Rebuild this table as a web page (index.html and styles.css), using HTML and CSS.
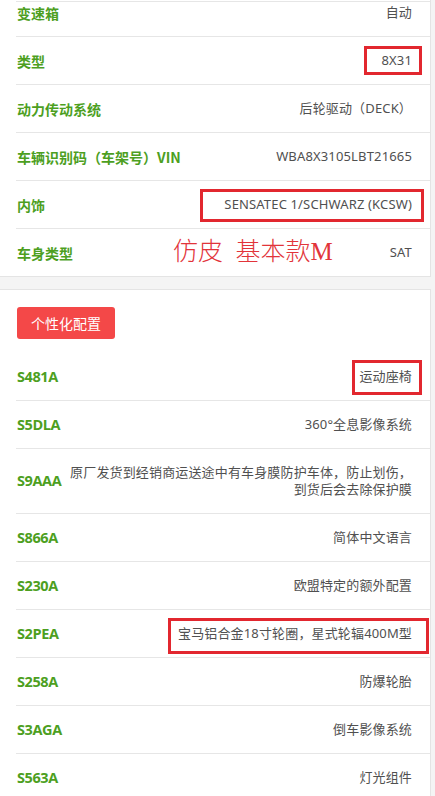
FILE: index.html
```html
<!DOCTYPE html>
<html lang="zh-CN">
<head>
<meta charset="utf-8">
<title>车辆配置</title>
<link rel="stylesheet" href="styles.css">
</head>
<body>
<div class="top-line"></div>
<section class="card card-first">
  <div class="row"><div class="label">变速箱</div><div class="value">自动</div></div>
  <div class="row"><div class="label">类型</div><div class="value mark mark-type">8X31</div></div>
  <div class="row"><div class="label">动力传动系统</div><div class="value">后轮驱动（DECK）</div></div>
  <div class="row"><div class="label">车辆识别码（车架号）VIN</div><div class="value">WBA8X3105LBT21665</div></div>
  <div class="row"><div class="label">内饰</div><div class="value mark mark-trim">SENSATEC 1/SCHWARZ (KCSW)</div></div>
  <div class="row row-last row-note"><div class="label">车身类型</div><span class="note">仿皮&nbsp; 基本款M</span><div class="value">SAT</div></div>
</section>
<section class="card">
  <div class="card-head"><button class="btn">个性化配置</button></div>
  <div class="row"><div class="label code">S481A</div><div class="value mark mark-seat">运动座椅</div></div>
  <div class="row"><div class="label code">S5DLA</div><div class="value">360°全息影像系统</div></div>
  <div class="row"><div class="label code">S9AAA</div><div class="value">原厂发货到经销商运送途中有车身膜防护车体，防止划伤，到货后会去除保护膜</div></div>
  <div class="row"><div class="label code">S866A</div><div class="value">简体中文语言</div></div>
  <div class="row"><div class="label code">S230A</div><div class="value">欧盟特定的额外配置</div></div>
  <div class="row"><div class="label code">S2PEA</div><div class="value mark mark-wheel">宝马铝合金18寸轮圈，星式轮辐400M型</div></div>
  <div class="row"><div class="label code">S258A</div><div class="value">防爆轮胎</div></div>
  <div class="row"><div class="label code">S3AGA</div><div class="value">倒车影像系统</div></div>
  <div class="row"><div class="label code">S563A</div><div class="value">灯光组件</div></div>
</section>
</body>
</html>
```
FILE: styles.css
```css
html, body {
  margin: 0;
  padding: 0;
}
body {
  background: #f4f4f4;
  font-family: "Noto Sans", "Noto Sans CJK SC", sans-serif;
  overflow: hidden;
}
.top-line {
  position: fixed;
  top: 1px;
  left: 16px;
  right: 5px;
  height: 1px;
  background: #e6e6e6;
  z-index: 2;
}
.card {
  background: #fff;
  margin-right: 4px;
  border-top: 1px solid #e4e4e4;
  border-bottom: 1px solid #e4e4e4;
  border-right: 1px solid #e4e4e4;
  padding-left: 16px;
}
.card-first {
  margin-top: -12px;
  margin-bottom: 12px;
}
.card-head {
  padding: 17px 0 14px 1px;
}
.btn {
  display: block;
  border: 0;
  background: #f44848;
  color: #fff;
  font-family: "Noto Sans CJK SC", sans-serif;
  font-size: 14px;
  height: 32px;
  width: 98px;
  padding: 0;
  border-radius: 3px;
  letter-spacing: 0;
}
.row {
  display: flex;
  align-items: center;
  justify-content: space-between;
  gap: 8px;
  padding: 14.5px 18px 14.5px 1px;
  border-bottom: 1px solid #e6e6e6;
  position: relative;
}
.row-last {
  border-bottom: 0;
}
.label {
  flex: 0 0 auto;
  color: #4d9f1f;
  font-family: "Noto Sans CJK SC", sans-serif;
  font-weight: 700;
  font-size: 14px;
  line-height: 18px;
}
.label.code {
  font-family: "Open Sans", "Noto Sans", sans-serif;
  font-size: 14.5px;
  letter-spacing: -0.4px;
}
.value {
  color: #505050;
  font-family: "Noto Sans", "Noto Sans CJK SC", sans-serif;
  font-size: 13px;
  letter-spacing: 0.15px;
  line-height: 17.5px;
  text-align: right;
}
.mark {
  position: relative;
}
.mark::after {
  content: "";
  position: absolute;
  border: 3px solid #e2272f;
}
.mark-type::after { left: -17px; right: -10px; top: -6px; bottom: -6px; }
.mark-trim::after { left: -24px; right: -12px; top: -7px; bottom: -9px; }
.mark-seat::after { left: -7px; right: -10px; top: -8px; bottom: -10px; }
.mark-wheel::after { left: -10px; right: -17px; top: -7px; bottom: -12px; }
.note {
  position: absolute;
  left: 157px;
  top: 7px;
  color: #e2343a;
  font-family: "Liberation Serif", "Noto Sans CJK SC", serif;
  font-weight: 300;
  font-size: 25px;
  line-height: 32px;
  white-space: pre;
}
```
